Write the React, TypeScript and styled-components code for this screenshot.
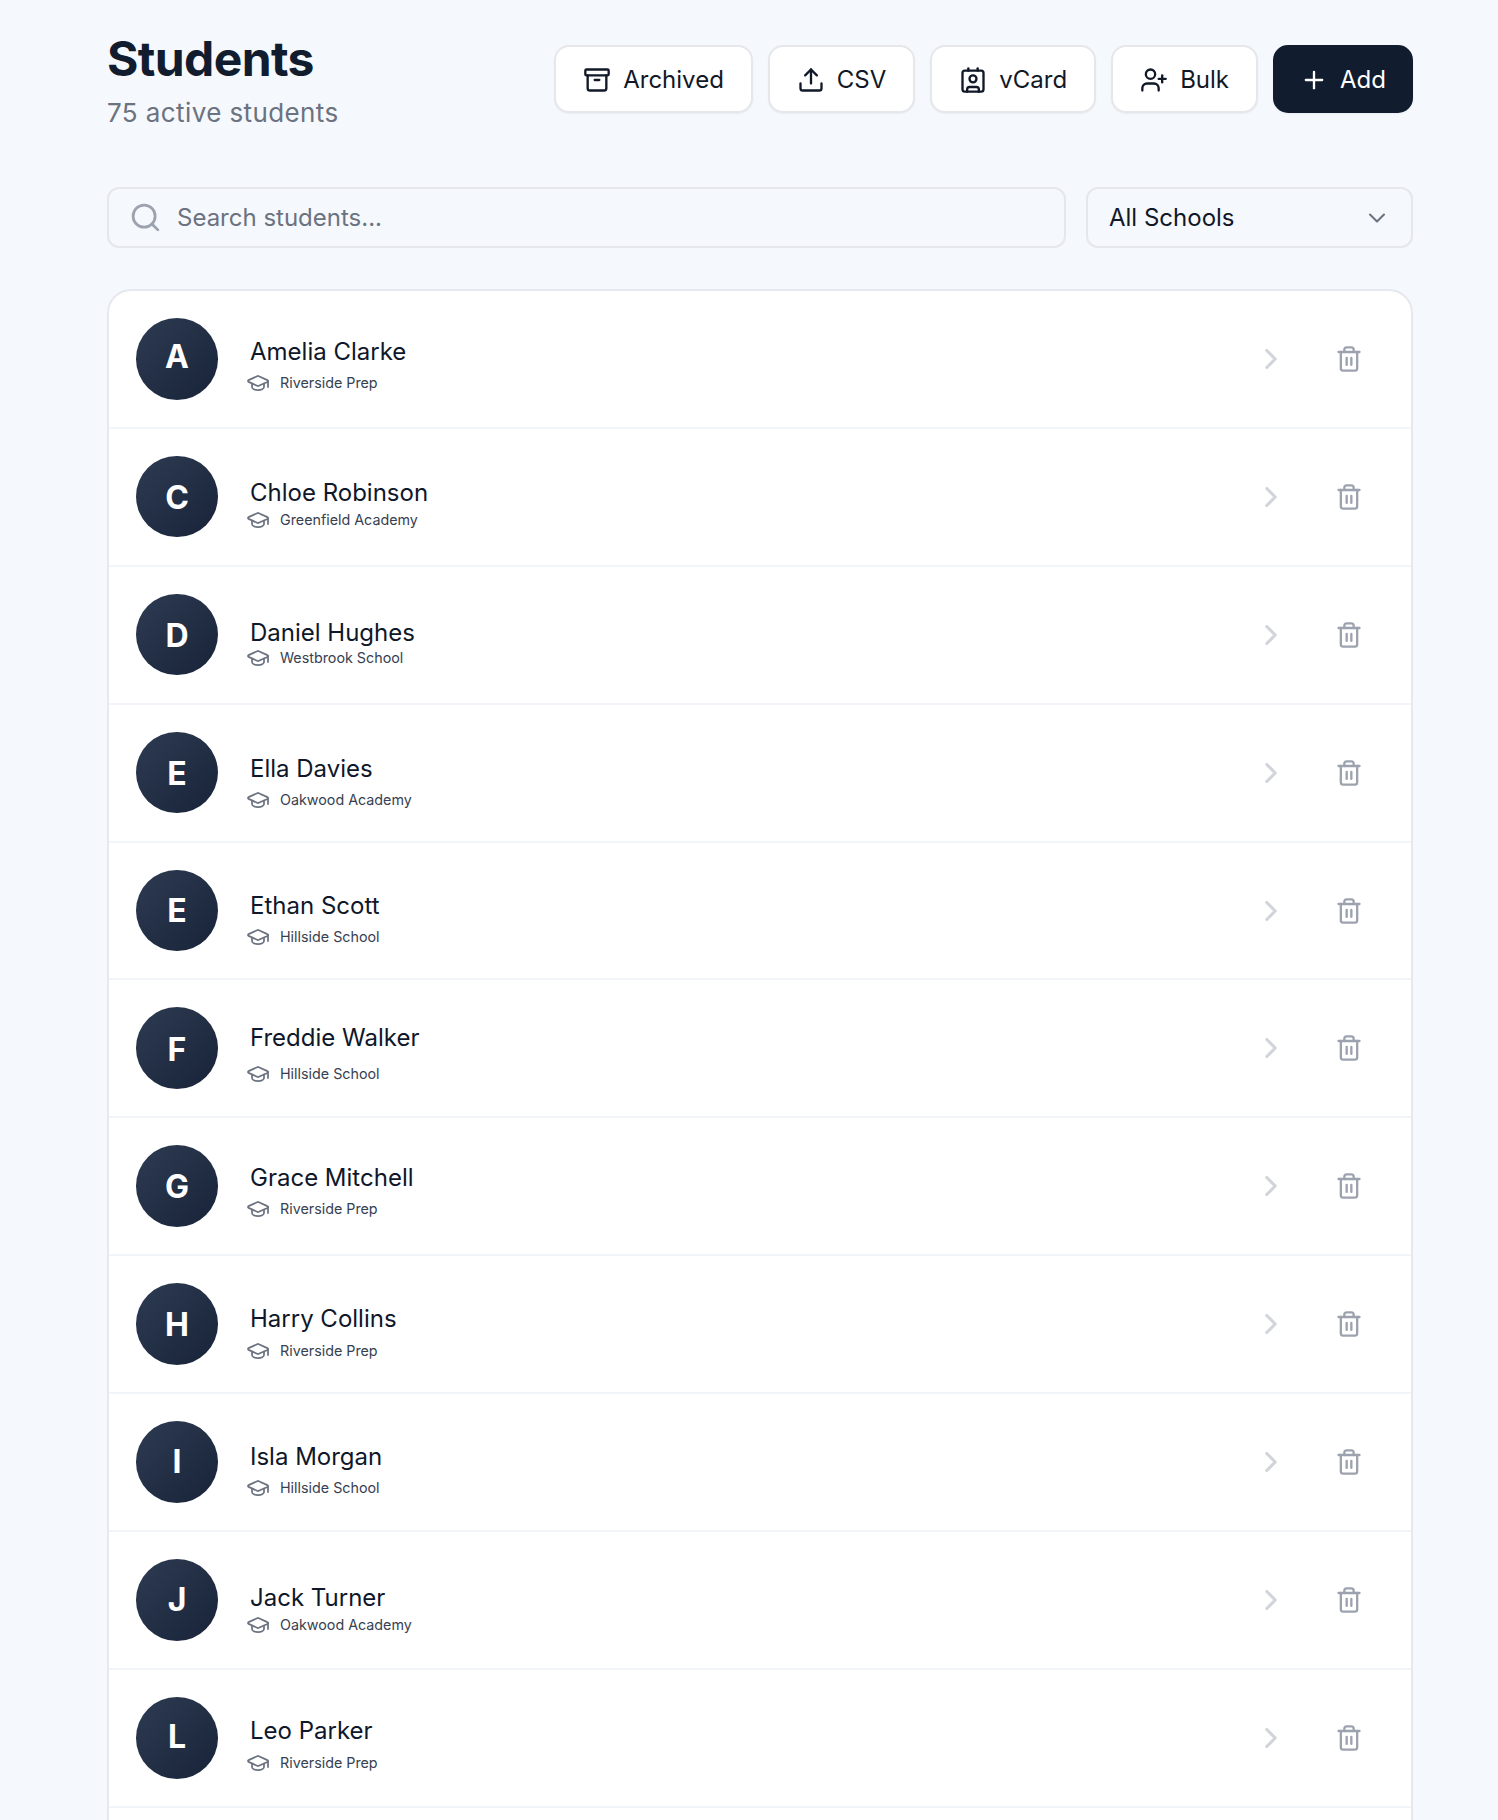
import React from 'react'
import styled, { createGlobalStyle } from 'styled-components'
import {
  Archive,
  ChevronDown,
  ChevronRight,
  Contact,
  GraduationCap,
  Plus,
  Search,
  Trash2,
  Upload,
  UserPlus,
} from 'lucide-react'

const GlobalStyle = createGlobalStyle`
  html, body {
    margin: 0;
    height: 1820px;
    overflow: hidden;
    background: #f5f8fc;
    font-family: Inter, 'Liberation Sans', sans-serif;
  }
`

const Page = styled.div`
  box-sizing: border-box;
  width: 1498px;
  padding: 24px 85px 0 107px;
`

const Header = styled.header`
  display: flex;
  justify-content: space-between;
  align-items: flex-start;
  height: 163px;
`

const Title = styled.h1`
  margin: 6px 0 0;
  font-size: 48px;
  line-height: 58px;
  font-weight: 700;
  letter-spacing: -0.62px;
  color: #111c2e;
`

const Subtitle = styled.p`
  margin: 8px 0 0;
  font-size: 26px;
  line-height: 34px;
  letter-spacing: 0.4px;
  color: #6b7280;
`

const Actions = styled.div`
  display: flex;
  gap: 15px;
  margin-top: 21px;
`

const Button = styled.button<{ $primary?: boolean }>`
  display: flex;
  align-items: center;
  gap: 12px;
  box-sizing: border-box;
  height: 68px;
  padding: 2px ${p => (p.$primary ? 25 : 27)}px 0;
  border: 2px solid ${p => (p.$primary ? '#111c2e' : '#e5e7eb')};
  border-radius: 15px;
  background: ${p => (p.$primary ? '#111c2e' : '#ffffff')};
  color: ${p => (p.$primary ? '#ffffff' : '#111827')};
  font: 400 24px/32px Inter, sans-serif;
  box-shadow: 0 1px 2px rgba(17, 28, 46, 0.05);
`

const Filters = styled.div`
  display: flex;
  gap: 20px;
  margin-bottom: 41px;
`

const SearchBox = styled.div`
  flex: 1;
  display: flex;
  align-items: center;
  gap: 15px;
  box-sizing: border-box;
  height: 61px;
  padding: 0 20px;
  border: 2px solid #e5e7eb;
  border-radius: 12px;
  color: #9ca3af;
`

const SearchText = styled.span`
  font-size: 24px;
  color: #6b7280;
`

const SchoolSelect = styled.div`
  display: flex;
  justify-content: space-between;
  align-items: center;
  box-sizing: border-box;
  width: 327px;
  height: 61px;
  padding: 0 20px 0 21px;
  border: 2px solid #e5e7eb;
  border-radius: 12px;
  font-size: 24px;
  color: #111827;
  svg {
    color: #6b7280;
  }
`

const List = styled.section`
  box-sizing: border-box;
  padding-bottom: 40px;
  border: 2px solid #e5e9ef;
  border-bottom: 0;
  border-radius: 24px 24px 0 0;
  background: #ffffff;
`

const Row = styled.div`
  display: flex;
  box-sizing: border-box;
  height: 137.9px;
  padding: 27px 28px 0 27px;
  border-bottom: 2px solid #f1f5f9;
`

const Avatar = styled.div<{ $shift: number }>`
  flex: none;
  display: flex;
  align-items: center;
  justify-content: center;
  box-sizing: border-box;
  width: 82px;
  height: 81.6px;
  padding: ${p => Math.max(p.$shift, 0) * 2}px 0 ${p => Math.max(-p.$shift, 0) * 2}px;
  border-radius: 50%;
  background: linear-gradient(135deg, #2d3b52, #182338);
  color: #ffffff;
  font-size: 32px;
  font-weight: 700;
`

const Info = styled.div<{ $top: number }>`
  flex: 1;
  padding: ${p => p.$top - 27}px 0 0 32px;
`

const Name = styled.div<{ $gap: number }>`
  margin-bottom: ${p => p.$gap}px;
  font-size: 24px;
  line-height: 32px;
  color: #0f172a;
`

const School = styled.div`
  display: flex;
  align-items: center;
  gap: 10px;
  margin-left: -4px;
  font-size: 14.3px;
  line-height: 20px;
  color: #374151;
  svg {
    color: #6b7280;
  }
`

const RowActions = styled.div`
  display: flex;
  align-items: center;
  gap: 47px;
  height: 82px;
  padding-right: 20px;
`

const students = [
  { name: 'Amelia Clarke', school: 'Riverside Prep', top: 45, gap: 3, shift: -2 },
  { name: 'Chloe Robinson', school: 'Greenfield Academy', top: 48, gap: -1, shift: 1 },
  { name: 'Daniel Hughes', school: 'Westbrook School', top: 50, gap: -3, shift: 1 },
  { name: 'Ella Davies', school: 'Oakwood Academy', top: 48, gap: 3, shift: 1 },
  { name: 'Ethan Scott', school: 'Hillside School', top: 47, gap: 3, shift: 0 },
  { name: 'Freddie Walker', school: 'Hillside School', top: 42, gap: 8, shift: 1 },
  { name: 'Grace Mitchell', school: 'Riverside Prep', top: 44, gap: 3, shift: 0 },
  { name: 'Harry Collins', school: 'Riverside Prep', top: 47, gap: 4, shift: 0 },
  { name: 'Isla Morgan', school: 'Hillside School', top: 47, gap: 3, shift: 0 },
  { name: 'Jack Turner', school: 'Oakwood Academy', top: 50, gap: -1, shift: 0 },
  { name: 'Leo Parker', school: 'Riverside Prep', top: 45, gap: 4, shift: -1 },
]

const App = () => {
  return (
    <Page>
      <GlobalStyle />
      <Header>
        <div>
          <Title>Students</Title>
          <Subtitle>75 active students</Subtitle>
        </div>
        <Actions>
          <Button><Archive size={28} strokeWidth={2} />Archived</Button>
          <Button><Upload size={28} strokeWidth={2} />CSV</Button>
          <Button><Contact size={28} strokeWidth={2} />vCard</Button>
          <Button><UserPlus size={28} strokeWidth={2} />Bulk</Button>
          <Button $primary><Plus size={28} strokeWidth={2} />Add</Button>
        </Actions>
      </Header>
      <Filters>
        <SearchBox>
          <Search size={33} strokeWidth={2} />
          <SearchText>Search students...</SearchText>
        </SearchBox>
        <SchoolSelect>
          All Schools
          <ChevronDown size={28} strokeWidth={1.8} />
        </SchoolSelect>
      </Filters>
      <List>
        {students.map(s => (
          <Row key={s.name}>
            <Avatar $shift={s.shift}>{s.name[0]}</Avatar>
            <Info $top={s.top}>
              <Name $gap={s.gap}>{s.name}</Name>
              <School>
                <GraduationCap size={24} strokeWidth={1.75} />
                {s.school}
              </School>
            </Info>
            <RowActions>
              <ChevronRight size={34} strokeWidth={2.2} color='#d1d5db' />
              <Trash2 size={28} strokeWidth={2} color='#9ca3af' />
            </RowActions>
          </Row>
        ))}
      </List>
    </Page>
  )
}

export default App
